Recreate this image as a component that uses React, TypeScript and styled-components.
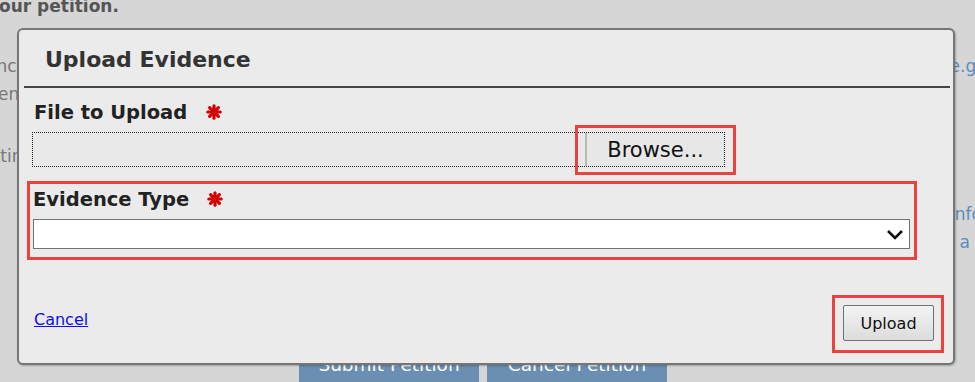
import React from 'react';
import styled, { createGlobalStyle } from 'styled-components';

const GlobalStyle = createGlobalStyle`
  html, body {
    margin: 0;
    padding: 0;
    background: #d6d6d6;
    font-family: "DejaVu Sans", Verdana, sans-serif;
  }
`;

const Page = styled.div`
  position: relative;
  width: 975px;
  height: 382px;
  overflow: hidden;
  display: flex;
  flex-direction: column;
  background: #d6d6d6;
`;

const PageHeading = styled.h2`
  margin: -4px 0 0 -1px;
  font-size: 17px;
  line-height: 20px;
  font-weight: bold;
  color: #555;
  white-space: nowrap;
`;

const Middle = styled.div`
  display: flex;
  justify-content: space-between;
  padding-top: 36px;
`;

const NoteColumn = styled.div<{ $color: string; $width: string }>`
  display: flex;
  flex-direction: column;
  width: ${({ $width }) => $width};
  font-size: 17px;
  line-height: 28px;
  color: ${({ $color }) => $color};
  white-space: nowrap;
`;

const NoteLine = styled.div<{ $indent: number; $gap?: number }>`
  margin-left: ${({ $indent }) => $indent}px;
  margin-top: ${({ $gap = 0 }) => $gap}px;
`;

const PageButtons = styled.div`
  margin-top: auto;
  display: flex;
  gap: 8px;
  padding-left: 299px;
`;

const PageButton = styled.div`
  width: 180px;
  height: 37px;
  box-sizing: border-box;
  padding-top: 10px;
  background: #6b8fb3;
  color: #fff;
  font-size: 18.5px;
  line-height: 20px;
  text-align: center;
`;

const Dialog = styled.div`
  position: absolute;
  left: 17px;
  top: 28px;
  width: 938px;
  height: 337px;
  box-sizing: border-box;
  border: 2px solid #767676;
  border-radius: 6px;
  background: #ebebeb;
  box-shadow: 1px 1px 2px rgba(0, 0, 0, 0.25);
  display: flex;
  flex-direction: column;
`;

const DialogTitle = styled.div`
  height: 56px;
  box-sizing: border-box;
  padding: 4px 0 0 26px;
  font-size: 22px;
  line-height: 52px;
  font-weight: bold;
  color: #333;
`;

const Divider = styled.hr`
  margin: 0 3px 0 5px;
  border: none;
  height: 2px;
  background: #454545;
`;

const DialogBody = styled.div`
  display: flex;
  flex-direction: column;
  padding: 0 19px 0 15px;
`;

const FieldLabel = styled.label<{ $gap: number }>`
  display: flex;
  align-items: center;
  margin-top: ${({ $gap }) => $gap}px;
  font-size: 19.5px;
  line-height: 22px;
  font-weight: bold;
  color: #222;
`;

const RequiredMark = styled.svg<{ $gap: number }>`
  margin: -3px 0 0 ${({ $gap }) => $gap}px;
  flex: none;
`;

const Highlight = styled.div<{ $inset: string }>`
  position: relative;
  display: flex;
  flex-direction: column;

  &::after {
    content: '';
    position: absolute;
    inset: ${({ $inset }) => $inset};
    border: 3px solid #e8433f;
    pointer-events: none;
  }
`;

const FileInput = styled.div`
  display: flex;
  width: 693px;
  height: 35px;
  box-sizing: border-box;
  margin: 8px 0 0 -2px;
  border: 1px dotted #222;
  background: #e9e9e9;
`;

const FileName = styled.div`
  flex: 1;
`;

const BrowseButton = styled.button`
  width: 139px;
  height: 100%;
  border: none;
  border-left: 2px solid #b9b9b9;
  background: #e7e7e7;
  font-family: "DejaVu Sans", Verdana, sans-serif;
  font-size: 21px;
  color: #111;
  padding: 0;
`;

const EvidenceGroup = styled(Highlight)`
  margin: 22px 24px 0 -1px;
`;

const Select = styled.div`
  margin-top: 8px;
  height: 30px;
  box-sizing: border-box;
  border: 1px solid #737373;
  background: #fff;
  display: flex;
  align-items: center;
  justify-content: flex-end;
  padding-right: 5px;
`;

const Footer = styled.div`
  display: flex;
  justify-content: space-between;
  align-items: flex-start;
  margin-top: 56px;
`;

const CancelLink = styled.a`
  margin-top: 5px;
  font-size: 16px;
  line-height: 20px;
  color: #0d0df2;
  text-decoration: underline;
`;

const UploadButton = styled.button`
  width: 91px;
  height: 36px;
  border: 1px solid #6f6f6f;
  border-radius: 2px;
  background: linear-gradient(#f3f3f3, #dcdcdc);
  font-family: "DejaVu Sans", Verdana, sans-serif;
  font-size: 16px;
  color: #111;
  padding: 0;
`;

function Required({ gap }: { gap: number }) {
  return (
    <RequiredMark $gap={gap} width="16" height="16" viewBox="0 0 16 16">
      <g stroke="#d40000" strokeWidth="3.2" strokeLinecap="round">
        <line x1="8" y1="1.8" x2="8" y2="14.2" />
        <line x1="1.8" y1="8" x2="14.2" y2="8" />
        <line x1="3.6" y1="3.6" x2="12.4" y2="12.4" />
        <line x1="12.4" y1="3.6" x2="3.6" y2="12.4" />
      </g>
      <circle cx="8" cy="8" r="3.2" fill="#d40000" />
    </RequiredMark>
  );
}

function Chevron() {
  return (
    <svg width="18" height="11" viewBox="0 0 18 11">
      <path d="M2 2 L9 9 L16 2" fill="none" stroke="#111" strokeWidth="2.6" />
    </svg>
  );
}

export default function App() {
  return (
    <>
      <GlobalStyle />
      <Page>
        <PageHeading>our petition.</PageHeading>
        <Middle>
          <NoteColumn $color="#777" $width="17px">
            <NoteLine $indent={-71}>acceptance of your evidence</NoteLine>
            <NoteLine $indent={-38}>evidence</NoteLine>
            <NoteLine $indent={-60} $gap={34}>
              Submitting
            </NoteLine>
          </NoteColumn>
          <NoteColumn $color="#5e8cba" $width="20px">
            <NoteLine $indent={-38}>state.gov</NoteLine>
            <NoteLine $indent={-5} $gap={120}>
              information
            </NoteLine>
            <NoteLine $indent={-18}>at a</NoteLine>
          </NoteColumn>
        </Middle>
        <PageButtons>
          <PageButton>Submit Petition</PageButton>
          <PageButton>Cancel Petition</PageButton>
        </PageButtons>

        <Dialog>
          <DialogTitle>Upload Evidence</DialogTitle>
          <Divider />
          <DialogBody>
            <FieldLabel $gap={14}>
              File to Upload
              <Required gap={19} />
            </FieldLabel>
            <FileInput>
              <FileName />
              <Highlight $inset="-8px -12px -9px -10px">
                <BrowseButton>Browse...</BrowseButton>
              </Highlight>
            </FileInput>
            <EvidenceGroup $inset="-8px -7px -11px -6px">
              <FieldLabel $gap={0}>
                Evidence Type
                <Required gap={18} />
              </FieldLabel>
              <Select>
                <Chevron />
              </Select>
            </EvidenceGroup>
            <Footer>
              <CancelLink href="#">Cancel</CancelLink>
              <Highlight $inset="-10px -10px -12px -11px">
                <UploadButton>Upload</UploadButton>
              </Highlight>
            </Footer>
          </DialogBody>
        </Dialog>
      </Page>
    </>
  );
}
